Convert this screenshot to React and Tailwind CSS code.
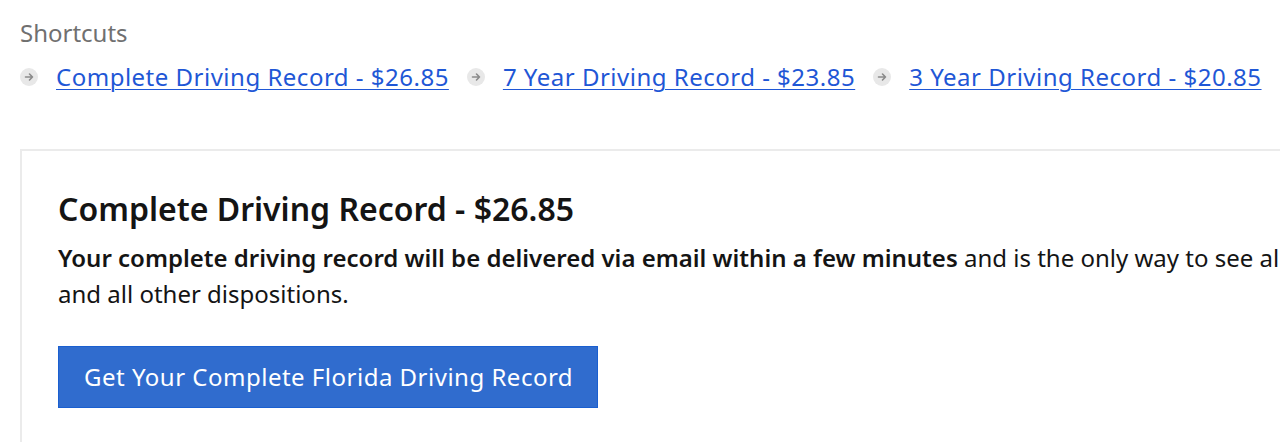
import React from 'react';

const links = [
  'Complete Driving Record - $26.85',
  '7 Year Driving Record - $23.85',
  '3 Year Driving Record - $20.85',
];

function ArrowDot() {
  return (
    <span className="inline-flex h-[18px] w-[18px] shrink-0 items-center justify-center rounded-full bg-[#e8e8e8]">
      <svg width="10" height="10" viewBox="0 0 10 10" fill="none" stroke="#8a8a8a" strokeWidth="1.6" strokeLinecap="round" strokeLinejoin="round">
        <path d="M1.5 5h7M5.5 2l3 3-3 3" />
      </svg>
    </span>
  );
}

export default function App() {
  return (
    <div className="min-h-[442px] bg-white pl-5 pt-[18px] font-['Noto_Sans',sans-serif] overflow-hidden">
      <div className="text-[24px] leading-[30px] text-[#707070]">Shortcuts</div>
      <div className="mt-[14px] flex items-center">
        {links.map((l, i) => (
          <div key={i} className={`flex items-center ${i > 0 ? 'ml-[18px]' : ''}`}>
            <ArrowDot />
            <a href="#" className="ml-[18px] text-[24px] leading-[30px] tracking-[0.5px] text-[#1f57d6] underline underline-offset-[3px] decoration-1">
              {l}
            </a>
          </div>
        ))}
      </div>

      <div className="mt-[57px] w-[1400px] border-l-2 border-t-2 border-[#ebebeb] pl-[36px] pt-[38px] pb-[34px]">
        <h2 className="text-[32px] leading-[40px] font-semibold text-[#141414]">Complete Driving Record - $26.85</h2>
        <p className="mt-[11px] whitespace-nowrap text-[24px] leading-[36px] text-[#141414]">
          <strong className="font-semibold">Your complete driving record will be delivered via email within a few minutes</strong> and is the only way to see all violations, suspensions, points, crashes
          <br />
          and all other dispositions.
        </p>
        <button className="mt-[34px] h-[62px] w-[540px] border border-[#1a5fd0] bg-[#306cce] text-left pl-[25px] text-[24px] tracking-[0.5px] text-white">
          Get Your Complete Florida Driving Record
        </button>
      </div>
    </div>
  );
}
